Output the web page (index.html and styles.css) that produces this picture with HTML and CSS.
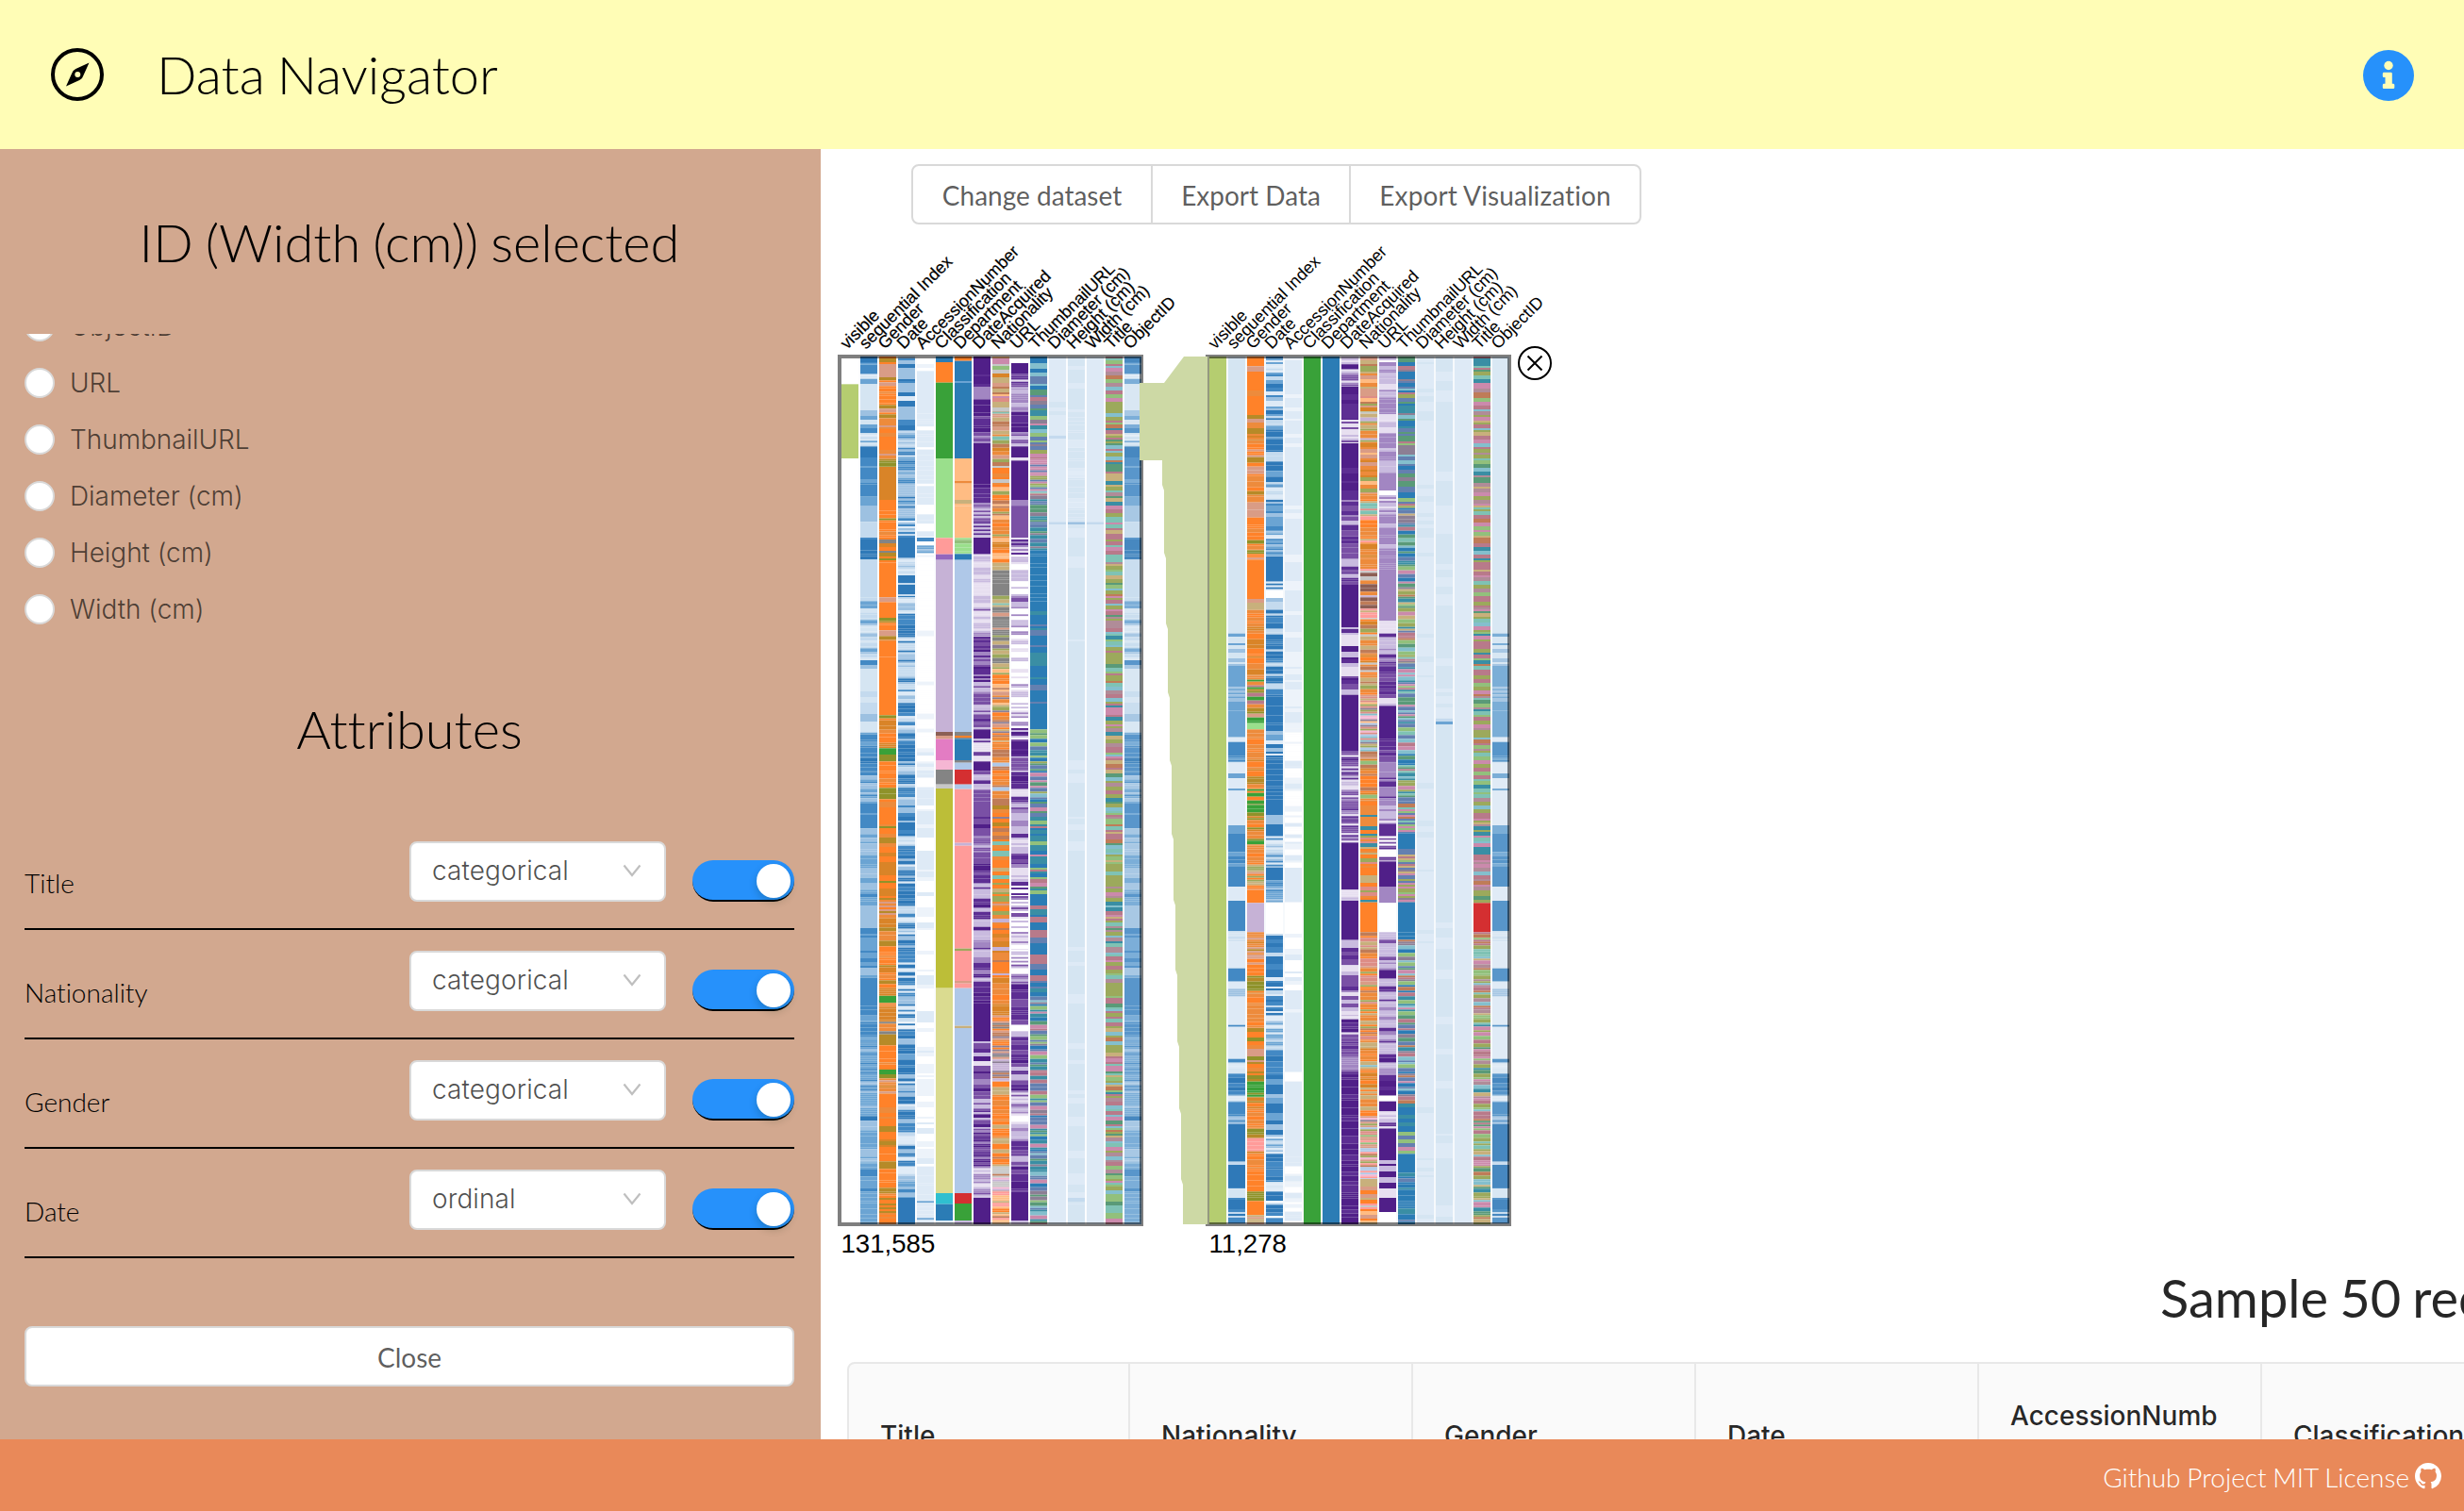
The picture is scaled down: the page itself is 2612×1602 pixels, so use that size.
FILE: index.html
```html
<!DOCTYPE html>
<html lang="en">
<head>
<meta charset="utf-8">
<title>Data Navigator</title>
<link rel="stylesheet" href="styles.css">
</head>
<body>
<header class="header">
  <svg class="logo" viewBox="0 0 56 56"><circle cx="28" cy="28" r="26" fill="none" stroke="#000" stroke-width="4"/><path fill-rule="evenodd" d="M40.500 15.500 34.200 29.500Q33.700 32.200 30.200 34L16 40.500 22.300 26.500Q23 23.500 26.300 22ZM28.300 25.100a3 3 0 1 0 0 6 3 3 0 0 0 0-6Z"/></svg>
  <h1 class="brand">Data Navigator</h1>
  <svg class="info" viewBox="0 0 54 54"><circle cx="27" cy="27" r="27" fill="#2691fb"/><circle cx="27" cy="16.500" r="4.700" fill="#fffdb6"/><path fill="#fffdb6" d="M22 23.700h7.500q1.300 0 1.300 1.300v10.700h1.200q1.300 0 1.300 1.300v2.700q0 1.300-1.300 1.300H22q-1.200 0-1.200-1.300V37q0-1.300 1.200-1.300h1.500V29H22q-1.200 0-1.200-1.300V25q0-1.300 1.200-1.300Z"/></svg>
</header>
<div class="body">
  <aside class="sidebar">
    <h2 class="side-title">ID (Width (cm)) selected</h2>
    <div class="radios">
      <div class="radio-list">
        <label class="radio"><i class="dot"></i>ObjectID</label>
        <label class="radio"><i class="dot"></i>URL</label>
        <label class="radio"><i class="dot"></i>ThumbnailURL</label>
        <label class="radio"><i class="dot"></i>Diameter (cm)</label>
        <label class="radio"><i class="dot"></i>Height (cm)</label>
        <label class="radio"><i class="dot"></i>Width (cm)</label>
      </div>
    </div>
    <h2 class="side-title attrs">Attributes</h2>
    <div class="rows">
      <div class="row"><span class="name">Title</span><span class="select">categorical<svg class="chev" viewBox="0 0 20 14"><path d="M1.500 1.500 10 12 18.500 1.500"/></svg></span><span class="switch"><i></i></span></div>
      <div class="row"><span class="name">Nationality</span><span class="select">categorical<svg class="chev" viewBox="0 0 20 14"><path d="M1.500 1.500 10 12 18.500 1.500"/></svg></span><span class="switch"><i></i></span></div>
      <div class="row"><span class="name">Gender</span><span class="select">categorical<svg class="chev" viewBox="0 0 20 14"><path d="M1.500 1.500 10 12 18.500 1.500"/></svg></span><span class="switch"><i></i></span></div>
      <div class="row"><span class="name">Date</span><span class="select">ordinal<svg class="chev" viewBox="0 0 20 14"><path d="M1.500 1.500 10 12 18.500 1.500"/></svg></span><span class="switch"><i></i></span></div>
    </div>
    <button class="close">Close</button>
  </aside>
  <main class="main">
    <div class="toolbar"><button>Change dataset</button><button>Export Data</button><button>Export Visualization</button></div>
    <svg class="chart" id="chart" viewBox="870 238 780 1112"></svg>
    <section class="sample">
      <h2>Sample 50 records</h2>
      <div class="table">
        <div class="th first">Title</div><div class="th">Nationality</div><div class="th">Gender</div><div class="th">Date</div><div class="th">AccessionNumber</div><div class="th">Classification</div>
      </div>
    </section>
  </main>
</div>
<footer class="footer"><span>Github Project MIT License</span>
  <svg class="gh" viewBox="0 0 16 16"><path fill="#fff" d="M8 0C3.580 0 0 3.580 0 8c0 3.540 2.290 6.530 5.470 7.590.4.070.550-.170.550-.380 0-.190-.010-.820-.010-1.490-2.010.370-2.530-.490-2.690-.940-.090-.230-.480-.940-.820-1.130-.280-.150-.680-.520-.010-.530.630-.010 1.080.580 1.230.820.720 1.210 1.870.870 2.330.660.070-.520.280-.870.510-1.070-1.780-.2-3.640-.890-3.640-3.950 0-.870.310-1.590.820-2.150-.080-.2-.360-1.020.080-2.120 0 0 .670-.210 2.200.820.640-.180 1.320-.270 2-.270s1.360.090 2 .270c1.530-1.040 2.200-.820 2.200-.820.440 1.100.160 1.920.080 2.120.510.560.820 1.270.820 2.150 0 3.070-1.870 3.750-3.650 3.950.290.250.540.730.540 1.480 0 1.070-.010 1.930-.010 2.200 0 .210.150.460.550.380A8.010 8.010 0 0 0 16 8c0-4.420-3.580-8-8-8Z"/></svg>
</footer>
<script src="chart.js"></script>
</body>
</html>
```
FILE: styles.css
```css
* { box-sizing: border-box; }
body { margin: 0; height: 1602px; overflow: hidden; font-family: Lato, sans-serif; font-size: 28px; color: #000; background: #fff; display: flex; flex-direction: column; font-variant-ligatures: none; }
h1, h2 { margin: 0; font-weight: 300; font-size: 56px; word-spacing: -.04em; }
.header { height: 158px; flex: none; background: #fffdb6; display: flex; align-items: center; padding: 0 53px 0 54px; }
.logo { width: 56px; height: 56px; }
.brand { margin-left: 56px; flex: 1; line-height: 84px; }
.info { width: 54px; height: 54px; margin-top: 2px; }
.body { flex: none; height: 1368px; display: flex; }
.sidebar { width: 870px; flex: none; background: #d2a88f; padding: 57px 28px 0 26px; display: flex; flex-direction: column; }
.side-title { text-align: center; line-height: 84px; height: 84px; }
.radios { margin-top: 55px; height: 322px; overflow: hidden; font-family: Inter, sans-serif; color: rgba(0,0,0,.65); }
.radio-list { margin-top: -38px; }
.radio { display: flex; align-items: center; height: 60px; font-weight: 300; letter-spacing: -.05px; }
.dot { width: 32px; height: 32px; border: 2px solid #d9d9d9; border-radius: 50%; background: #fff; margin-right: 16px; }
.attrs { margin-top: 55px; }
.rows { margin-top: 55px; }
.row { height: 116px; border-bottom: 2px solid #000; display: flex; align-items: flex-start; padding-top: 22px; }
.name { flex: 1; font-weight: 300; line-height: 42px; margin-top: 23px; }
.select { width: 272px; height: 64px; border: 2px solid #d9d9d9; border-radius: 8px; background: #fff; display: flex; align-items: center; justify-content: space-between; padding: 0 24px 2px 22px; font-family: Inter, sans-serif; font-weight: 300; color: rgba(0,0,0,.7); letter-spacing: .1px; }
.chev { width: 20px; height: 14px; fill: none; stroke: #bfbfbf; stroke-width: 2.200; }
.switch { width: 108px; height: 44px; margin: 20px 0 0 28px; border-radius: 22px; background: #2691fb; border-bottom: 2px solid #000; display: flex; justify-content: flex-end; padding: 4px 4px 0 0; }
.switch i { width: 36px; height: 36px; border-radius: 50%; background: #fff; box-shadow: 0 4px 8px rgba(0,35,11,.2); }
.close { margin-top: 72px; height: 64px; flex: none; border: 2px solid #d9d9d9; border-radius: 8px; background: #fff; font: 400 28px Lato, sans-serif; color: rgba(0,0,0,.65); padding: 2px 0 0; }
.main { flex: 1; min-width: 0; overflow: hidden; padding-top: 16px; }
.toolbar { display: flex; margin-left: 96px; height: 64px; width: 774px; border: 2px solid #d9d9d9; border-radius: 8px; }
.toolbar button { border: 0; border-right: 2px solid #d9d9d9; background: none; padding: 2px 0 0; width: 210px; font: 400 28px Lato, sans-serif; color: rgba(0,0,0,.65); white-space: nowrap; }
.toolbar button:first-child { width: 254px; }
.toolbar button:last-child { flex: 1; border: 0; letter-spacing: .1px; }
.chart { display: block; width: 780px; height: 1112px; }
.chart text { font-family: "Liberation Sans", Arial, sans-serif; }
.sample { margin-left: 28px; width: 3233px; }
.sample h2 { text-align: center; font-weight: 400; color: rgba(0,0,0,.85); line-height: 52px; height: 94px; }
.table { display: flex; border: 2px solid #e8e8e8; border-radius: 8px 8px 0 0; background: #fafafa; height: 180px; }
.th { width: 300px; height: 100%; border-right: 2px solid #e8e8e8; padding: 0 38px 24px 33px; display: flex; align-items: center; font: 500 28px/42px Inter, sans-serif; color: rgba(0,0,0,.85); word-break: break-all; }
.th.first { width: 298px; }
.footer { height: 76px; flex: none; background: #e98959; color: #fff; display: flex; align-items: center; justify-content: flex-end; padding-right: 24px; font-weight: 300; gap: 6px; word-spacing: -.03em; }
.footer span { margin-top: 3px; }
.gh { width: 28px; height: 28px; margin-top: 2px; }
```
FILE: chart.js
```js
// Each column is a list of segments "end:colours:run". Ends are in thirds of a
// pixel below the labels; run is the longest stripe, in 2px rows (0 = solid).
const TOP = 370;
const START = 24;
const COLORS = {
  0: '#ffffff', 1: '#deeaf6', 2: '#c4daee', 3: '#9dc1e1', 4: '#6ba4d3', 5: '#4389c4', 6: '#2f79b8', 7: '#d5e5f2', 8: '#edf3fa',
  a: '#e7dff0', b: '#c9bbdf', c: '#a286c2', d: '#7a50a5', e: '#5d2e93', f: '#501f88', g: '#b5cd70',
  o: '#ff8229', p: '#ed8b3c', q: '#d98428', r: '#d99c86', s: '#b68a28', t: '#8f922a', u: '#39a139',
  v: '#2b7cb5', w: '#9adf8c', x: '#ff9b99', y: '#c6b2d6', z: '#afc8e8', A: '#9467bd', B: '#8c5f55', C: '#e37cc3',
  D: '#f5b6d3', E: '#848484', F: '#bcbe38', G: '#c7c7c7', H: '#dadb90', I: '#2fbfd0', J: '#d42f31', K: '#ffbc83',
  L: '#b87a8a', M: '#cb8aac', N: '#7fc2b4', O: '#9ca95c', P: '#bf7c58', Q: '#6480b0', R: '#3a8ea4', S: '#84bfcd',
  T: '#8c7f94', U: '#92c07c', V: '#c8b07c', W: '#dd8d86', X: '#5a9a78', Y: '#b08c98'
};
const LABELS = ['visible', 'sequential Index', 'Gender', 'Date', 'AccessionNumber', 'Classification', 'Department', 'DateAcquired',
  'Nationality', 'URL', 'ThumbnailURL', 'Diameter (cm)', 'Height (cm)', 'Width (cm)', 'Title', 'ObjectID'];
const TITLE = '2784:LYMONUSLPOVRNOYMULXOS:2';
const SEQ1 = '45:65:3 50:4:0 80:5:0 95:71:1 112:4:0 195:7:0 225:344:2 240:7:0 268:454:2 310:2714:1 345:6:0 372:5:0 430:545:2 470:5:0 500:4:0 550:3:0 600:2:0 640:56:3 670:66:2 790:2:0 990:2723274:2 1005:5:0 1220:777273772:4 1300:54:3 1345:56:3 1440:4534:2 1525:455:2 1610:334:3 1720:434:3 1770:544:3 1830:3:0 2000:4345:2 2090:5:0 2140:54:3 2210:45:2 2440:44354:1 2455:6:0 2590:3434:4 2680:54:4 2784:445:3';
const SEQ2 = '905:7:0 915:4:0 930:7:0 1008:37147:1 1075:4:0 1110:374:1 1150:43:2 1235:4:0 1250:1:0 1295:5:0 1315:45:1 1350:1:0 1365:4:0 1398:1:0 1405:4:0 1515:1:0 1540:45:2 1600:5:0 1645:54:2 1710:5:0 1755:1:0 1852:5:0 1885:27:1 1970:1:0 2012:5:0 2035:1:0 2060:3:1 2150:1:0 2156:5:0 2258:1:0 2270:5:0 2305:171:1 2375:56:3 2395:14:1 2435:5:0 2465:535:1 2585:6:0 2595:2:0 2670:66562:3 2700:7:0 2745:65:3 2784:5265:1';
const SETS = [
  { x: 892, count: '131,585', columns: [
    '112:0:0 348:g:0 2784:0:0', SEQ1,
    '100:oosr:3 225:oroorprs:2 350:oppors:2 375:st:2 480:qqsq:2 515:o:0 550:oto:3 600:oop:4 680:soEtoq:2 790:o:0 805:r:0 855:o:0 865:t:0 930:oorps:3 980:oop:3 1165:o:0 1175:t:0 1270:oopq:3 1290:u:0 1312:t:0 1440:oooopt:3 1740:oosptoq:3 1810:rops:1 2058:oosqpq:3 2080:u:0 2140:pq:2 2180:opE:2 2215:s:0 2280:opo:4 2295:uo:3 2320:tu:3 2370:pqr:2 2560:ooopqs:3 2700:ooops:4 2784:oposr:1',
    '150:53632:2 165:1:0 260:6635:4 380:25436:1 540:35634:1 600:3251:1 665:6:0 720:2713:1 790:626:2 842:3127:2 905:65:3 1000:3612:1 1090:5326:1 1440:56636132:2 1550:6365:2 1580:271:1 2110:63516526:2 2170:1628:1 2330:653664:3 2600:6316526:2 2630:21:1 2700:534:2 2784:66:0',
    '70:80:2 205:1:0 320:101:3 430:181:3 600:1810:4 612:5:0 625:0:0 650:434:1 1240:0000000008:3 1340:0018:3 1440:10:5 1680:1018:4 2220:001018:4 2600:000188:3 2710:118:5 2784:114:2',
    '42:v:0 107:o:0 348:u:0 601:w:0 653:x:0 671:A:0 1218:y:0 1230:B:0 1241:r:0 1308:C:0 1338:D:0 1385:E:0 1398:G:0 2033:F:0 2685:H:0 2720:I:0 2772:v:0 2784:1:0',
    '38:o:0 102:v:0 108:4:0 348:v:0 420:K:0 428:p:0 480:K:0 500:KV:1 601:K:0 652:wwUw:2 671:v:0 1218:z:0 1240:oE:2 1308:v:0 1316:E:0 1338:z:0 1385:J:0 1400:z:0 1571:x:0 1580:y:0 1907:x:0 1914:O:0 2010:x:0 2018:r:0 2033:x:0 2153:z:0 2160:V:0 2685:z:0 2718:J:0 2772:u:0 2784:b:0',
    '75:f:0 120:fe:3 160:cbe:1 265:efdf:4 300:dc:2 430:f:0 490:fe:3 550:dcb:1 600:bef:1 653:f:0 785:aaab:2 860:abaad:2 915:bac:1 1060:dcef:1 1210:dceb:2 1240:f:0 1312:aabe:1 1342:f:0 1440:edbd:2 1550:eddf:3 1600:bdc:1 1700:edf:3 1850:eebf:3 2080:efecb:3 2190:f:0 2265:bdef:2 2280:a:0 2350:dfc:3 2480:edbf:2 2600:dcef:1 2700:bdca:1 2784:f:0',
    '200:WPVKUMOrDqG:2 360:rVpqpNOorP:2 440:poWGP:2 680:oopPrKOq:2 745:ETV:2 785:E:0 1000:TVEPNrEVO:2 1250:oPVOKprT:2 1440:oopzpPT:2 1560:ooPpsTQ:2 1800:oprpVOoN:2 2000:ooPpqyp:2 2120:poqpo:3 2260:TPrpEo:1 2330:yTPy:1 2600:oopPpVo:3 2680:GyPGD:1 2784:KxoxVP:1',
    '45:0:0 80:f:0 130:baed:1 200:cdcb:2 265:ef:4 310:dbc:1 345:f:0 355:a:0 480:f:0 500:ec:1 600:d:0 655:ecba:1 780:00000ab:2 820:bdc:2 1200:000ab0c:1 1300:bfe0d:1 1345:0d:2 1400:fe:3 1440:aed:2 1560:cdbe:3 1605:ab:2 1638:ed:3 1695:bac:1 1740:0ed:2 1910:bcd0a:1 2020:00cbd:1 2150:edef:4 2170:0:0 2360:deefb:3 2440:abdc:1 2465:a0:2 2600:dcbe:3 2680:fed:4 2772:f:0 2784:b:0',
    '45:v:0 350:RQLvSQTMURXO:2 460:UQMSO:1 640:RvXTLRQ:2 810:vvvvvvR:4 1050:vvvQvRvvR:3 1210:vvQvv:4 1440:RQSOXvMUQ:2 1740:RvQMLvXUR:2 2060:vRvQvLO:3 2784:RLQUvTXMRSQ:2',
    '275:11171:3 285:2:0 550:1111117:3 558:2:0 2784:1:0', '200:717:4 550:177717:4 558:3:0 1440:7771:5 2700:7177:6 2720:72:2 2784:7:0', '550:1:0 558:2:0 2784:1:0',
    TITLE, SEQ1] },
  { x: 1282, count: '11,278', columns: [
    '2784:g:0', SEQ2,
    '55:o:0 72:r:0 210:ooopo:4 290:rppqs:2 470:oopors:3 560:orop:4 640:oopot:2 670:roto:1 795:o:0 830:Vr:2 905:opoq:2 1040:oopoq:3 1160:rLstpsu:2 1190:ru:2 1210:w:0 1400:oppoqs:3 1450:ouq:2 1580:tquop:2 1640:oqpp:2 1720:rVOKo:1 1762:o:0 1855:y:0 1940:qsppr:1 2050:osrot:2 2160:ppopo:3 2330:osotpr:2 2380:utu:2 2480:opoqs:2 2560:pxqst:2 2680:ooopo:4 2710:qt:2 2755:o:0 2784:rV:1',
    '50:1546:1 75:12:1 220:643251:2 440:6642:3 480:12:2 580:6534:3 660:1435:1 740:6:0 768:16:1 792:0:0 830:32:2 1100:65662:3 1215:66:5 1300:6413:2 1440:656:3 1550:636:3 1650:1325:1 1690:6:0 1760:4535:1 1860:0:0 2120:65261:2 2230:14213:1 2310:65:3 2500:6364:3 2560:1324:1 2650:656:4 2680:17:1 2784:65062:3',
    '945:1111118:3 1190:18188:3 1280:0008:3 1650:0018:3 1760:11:0 1860:0:0 2110:10108:3 2300:1:0 2330:0:0 2570:11:0 2784:0018:3',
    '2784:u:0', '2784:v:0',
    '50:abf:1 65:f:0 120:abdc:1 225:feef:3 300:acbd:1 480:feff:4 560:debc:2 750:eeedb:4 885:f:0 1100:feadbe:3 1280:f:0 1390:deabf:1 1570:edcad:1 1720:f:0 1755:ab:1 1880:f:0 1905:b:0 1960:eda:2 1980:a:0 2120:debca:2 2180:fea:3 2300:dced:2 2784:ffeff:4',
    '200:WPVKprpOrq:2 300:yUVGpO:2 460:KrpVOpq:2 620:xppWoNV:2 700:pqp:3 860:VGrPBpyx:2 1100:oqpVPOGp:2 1280:rVWKDSzOT:1 1440:oPpqrTU:2 1760:oVpWOoRp:2 1855:o:0 2200:ooWpPVrO:2 2440:ppVqoS:2 2640:xrOPDWUTz:1 2784:GVoKxr:2',
    '70:b0c:1 320:cbbcac:3 395:ccb:4 450:c:0 465:0:0 520:cba:1 700:cccccb:4 865:c:0 905:ba:2 1010:decb:2 1110:eed:3 1135:ba:2 1240:f:0 1315:fde:3 1440:ccce:5 1510:bca:2 1550:e:0 1630:0aed:1 1710:f:0 1762:c:0 1855:0:0 1975:bcbd:2 2003:f:0 2255:cbbcbe:2 2270:f:0 2310:bc:1 2375:fef:3 2393:0:0 2425:f:0 2480:eab:1 2580:f:0 2670:efbf:3 2700:a:0 2745:f:0 2784:0:0',
    '30:X:0 500:QLvvRSTXvUOQ:2 1000:LQVSNRXMUOTvP:2 1440:RSLQMOvXNU:2 1540:NUMPQ:1 1590:v:0 1760:TLVQUMO:1 1855:v:0 2400:XRSTLUvQPM:2 2490:vRv:2 2560:YUQM:2 2620:v:0 2784:vvvQvR:3',
    '2784:1111111171:3', '1175:7771771:5 1185:2:0 1194:4:0 2784:7771777:5', '2784:1:0',
    '1762:' + TITLE.slice(5) + ' 1855:J:0 ' + TITLE, SEQ2] }
];

let seed = 7;
const rand = () => (seed = (seed * 16807) % 2147483647) / 2147483647;

function column(spec, x, opacity) {
  let v = START, out = `<g opacity="${opacity}">`;
  for (const part of spec.split(' ')) {
    const [end, palette, run] = part.split(':');
    const limit = Number(end), longest = Number(run) || 0;
    while (v < limit) {
      const next = longest ? Math.min(limit, v + 6 * (1 + Math.floor(rand() * longest))) : limit;
      const color = COLORS[palette[Math.floor(rand() * palette.length)]];
      out += `<rect x="${x}" y="${TOP + v / 3}" width="18" height="${(next - v) / 3}" fill="${color}"/>`;
      v = next;
    }
  }
  return out + '</g>';
}

function frame(x) {
  return `<rect x="${x - 2}" y="378" width="320" height="920" fill="none" stroke="#000" stroke-opacity=".5" stroke-width="4"/>`;
}

let svg = '';
SETS.forEach((set, i) => {
  svg += `<rect x="${set.x}" y="378" width="318" height="920" fill="${i ? '#f6f9fc' : '#fbfcfe'}"/>`;
  set.columns.forEach((spec, c) => {
    // The ID column repeats the stripes of the index column.
    seed = 17 + i * 40 + (c === 15 ? 1 : c);
    svg += column(spec, set.x + c * 20, c === 15 ? 0.88 : 1);
  });
  svg += frame(set.x);
  LABELS.forEach((label, c) => {
    svg += `<text font-size="18" stroke="#000" stroke-width="${i ? 0 : 0.2}" transform="translate(${set.x + c * 20 + 6} 371) rotate(-45)">${label}</text>`;
  });
  svg += `<text font-size="27.600" x="${set.x - 0.5}" y="1328">${set.count}</text>`;
});
svg += '<path fill="#cdd9a5" d="M1208 406h26l21-28h25v920h-26v-42l-2-6v-69l-2-6v-65l-2-6v-70l-2-6v-68l-2-6v-64l-2-6v-72l-2-6v-66l-2-6v-67l-2-6v-69l-2-6v-66l-2-6v-26h-24Z"/>';
svg += '<path stroke="#95997f" stroke-width="2" d="M1281 378v920"/>';
svg += '<g fill="none" stroke="#000" stroke-width="2"><circle cx="1627" cy="385" r="17"/><path d="m1619.500 377.500 15 15m0-15-15 15"/></g>';
document.getElementById('chart').innerHTML = svg;
```
